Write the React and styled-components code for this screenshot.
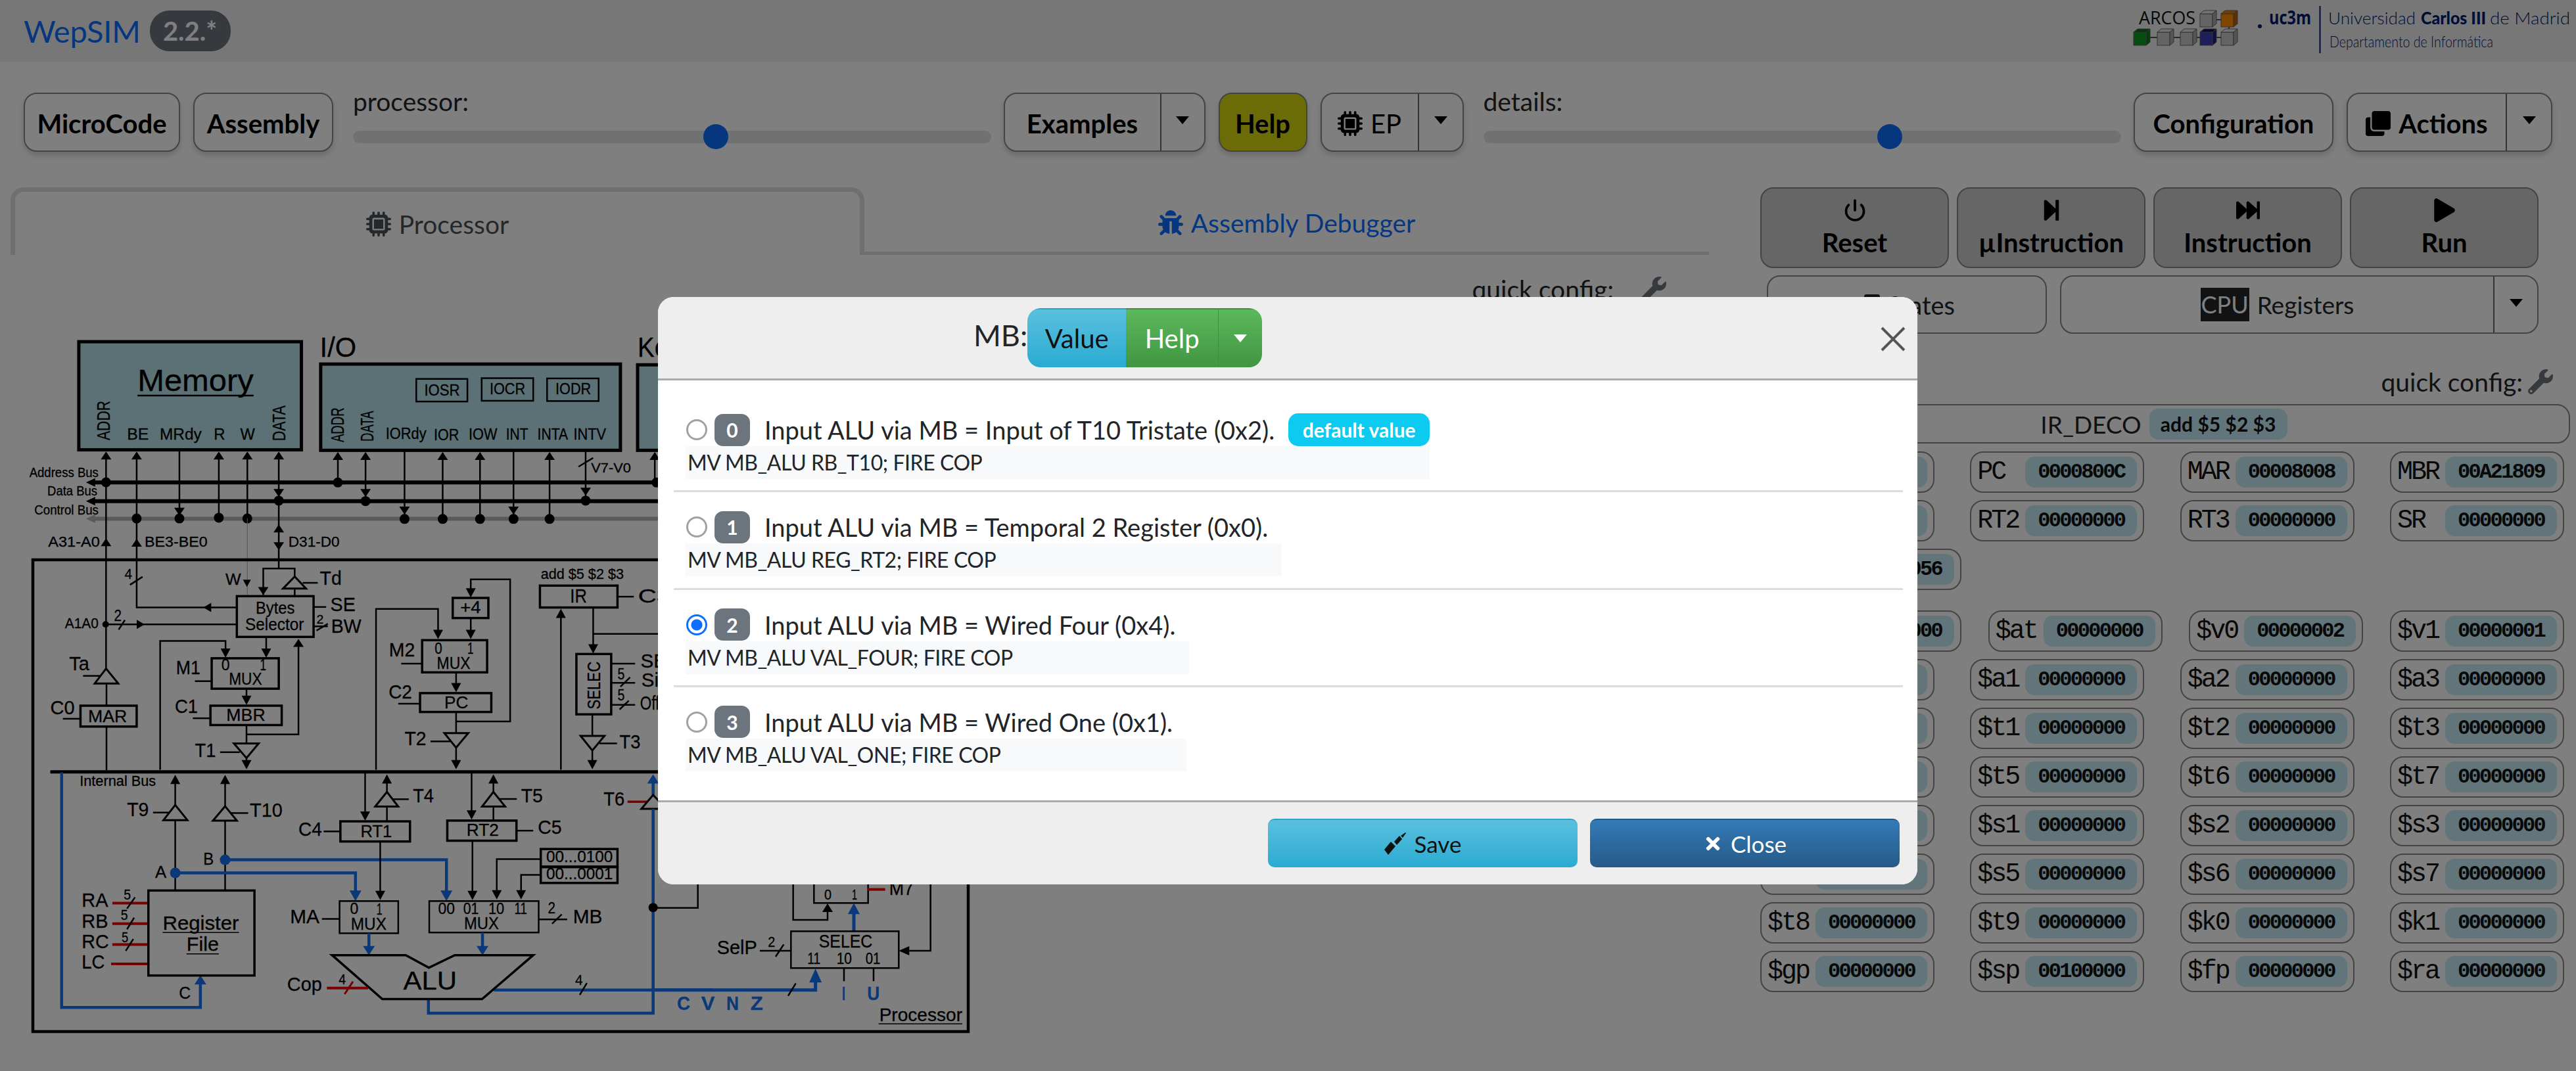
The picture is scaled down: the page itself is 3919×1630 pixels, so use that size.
import React from "react";
import styled, { createGlobalStyle } from "styled-components";
import { FaBug, FaStepForward, FaFastForward, FaPlay, FaWrench, FaClone, FaTimes } from "react-icons/fa";
import { FaMicrochip } from "react-icons/fa6";
import { Power } from "lucide-react";

const UI = `Lato, "Open Sans", sans-serif`;
const MONO = `"Liberation Mono", monospace`;

const GlobalStyle = createGlobalStyle`
  html, body { margin: 0; padding: 0; background: #fff; }
  body { font-family: ${UI}; color: #212529; }
  * { box-sizing: border-box; }
`;

const Page = styled.div`width: 3919px; height: 1630px; overflow: hidden; position: relative; background: #fff;`;
const Header = styled.header`height: 94px; background: #eee; display: flex; align-items: center; justify-content: space-between; padding-left: 36px;`;
const Brand = styled.div`display: flex; align-items: center; gap: 14px;`;
const BrandName = styled.span`font-size: 47px; color: #0d6efd; letter-spacing: -.2px;`;
const VersionBadge = styled.span`width: 123px; height: 62px; border-radius: 30px; background: #6c757d; color: #fff; font-weight: 700; font-size: 40px; display: flex; align-items: center; justify-content: center;`;

const Toolbar = styled.div`display: flex; align-items: flex-start; gap: 20px; padding: 36px 36px 0; height: 191px;`;
const Btn = styled.button`
  flex: 0 0 ${p => p.$w}px; height: 90px; margin-top: 11px; padding: 3px 0 0;
  font: ${p => (p.$light ? 400 : 700)} 40px ${UI}; color: #000;
  background: ${p => p.$bg || "#fff"}; border: 2.5px solid #888; border-radius: 20px;
  box-shadow: 0 5px 10px rgba(0,0,0,.18); display: flex; align-items: center; justify-content: center; gap: 12px;
`;
const BtnGroup = styled.div`flex: 0 0 ${p => p.$w}px; height: 90px; margin-top: 11px; display: flex; border: 2.5px solid #888; border-radius: 20px; box-shadow: 0 5px 10px rgba(0,0,0,.18); background: #fff;`;
const GroupMain = styled.div`flex: 1; display: flex; align-items: center; justify-content: center; gap: 12px; padding-top: 3px; font-weight: ${p => (p.$light ? 400 : 700)}; font-size: 40px; color: #000;`;
const GroupCaret = styled.div`flex: 0 0 ${p => p.$w}px; border-left: 2px solid #666; display: flex; align-items: center; justify-content: center; padding-bottom: 6px;`;
const Caret = styled.span`width: 0; height: 0; border-left: 10px solid transparent; border-right: 10px solid transparent; border-top: 12px solid ${p => p.$c || "#000"};`;
const SliderBlock = styled.div`flex: 1; margin-left: 10px; margin-right: -1px; display: flex; flex-direction: column;`;
const SliderLabel = styled.div`font-size: 39px; line-height: 48px; color: #212529;`;
const Track = styled.div`position: relative; height: 19px; margin-top: 21px; background: #dee2e6; border-radius: 10px;`;
const Thumb = styled.span`position: absolute; top: -10px; width: 38px; height: 38px; margin-left: -19px; border-radius: 50%; background: #0d6efd;`;

const Main = styled.div`display: flex; height: 1345px;`;
const LeftCol = styled.div`flex: 0 0 2584px; margin-left: 16px; margin-right: 78px;`;
const Tabs = styled.div`display: flex; height: 103px;`;
const Tab = styled.div`
  flex: 1; display: flex; align-items: center; justify-content: center; gap: 12px; font-size: 39px; padding-top: ${p => (p.$active ? 2 : 9)}px;
  color: ${p => (p.$active ? "#495057" : "#0d6efd")};
  ${p => p.$active
    ? "border: 7px solid #dedede; border-bottom: 0; border-radius: 20px 20px 0 0;"
    : "border-bottom: 5px solid #dedede;"}
`;
const QuickLeft = styled.div`height: 62px; padding: 28px 65px 0 0; display: flex; justify-content: flex-end; align-items: flex-start; gap: 42px; font-size: 39px; line-height: 48px; color: #212529;`;
const WrenchIcon = styled(FaWrench)`font-size: 38px; color: #6c757d; margin-top: 5px;`;
const DiagramSvg = styled.svg`display: block; margin-left: -16px;`;

const RightCol = styled.div`flex: 0 0 1232px;`;
const ActionRow = styled.div`display: grid; grid-template-columns: repeat(4, 287px); column-gap: 12px; height: 123px;`;
const ActionBtn = styled.button`
  border: 2.5px solid #888; border-radius: 20px; background: #ccc; padding: 15px 0 0;
  font: 700 40px ${UI}; color: #000; display: flex; flex-direction: column; align-items: center; gap: 7px;
  svg { font-size: 36px; height: 36px; }
`;
const ViewRow = styled.div`display: flex; gap: 20px; margin: 11px 48px 0 10px; height: 89px;`;
const ViewBtn = styled.div`flex: 0 0 426px; border: 2.5px solid #888; border-radius: 20px; display: flex; align-items: center; justify-content: center; gap: 12px; font-size: 38px;`;
const ViewGroup = styled.div`flex: 1; border: 2.5px solid #888; border-radius: 20px; display: flex;`;
const ViewMain = styled.div`flex: 1; display: flex; align-items: center; justify-content: center; gap: 12px; font-size: 37px;`;
const CpuTag = styled.span`width: 74px; text-align: center; background: #212529; color: #fff; height: 51px; line-height: 51px; font-size: 36px;`;
const QuickRight = styled.div`height: 107px; padding: 49px 26px 0 0; display: flex; justify-content: flex-end; align-items: flex-start; gap: 8px; font-size: 39px; line-height: 48px;`;
const IrBox = styled.div`height: 60px; margin-left: 2px; padding-right: 6px; border: 2.5px solid #888; border-radius: 20px; display: flex; align-items: center; justify-content: center; gap: 12px; font-size: 37px;`;
const IrPill = styled.span`width: 210px; height: 47px; border-radius: 14px; background: #c4eaf6; display: flex; align-items: center; justify-content: center; font-size: 30px; font-weight: 700; color: #111;`;
const RegRows = styled.div`display: flex; flex-direction: column; gap: 11px; margin: ${p => p.$top}px 9px 0 0;`;
const RegRow = styled.div`display: flex; justify-content: ${p => (p.$start ? "flex-start" : "space-between")};`;
const RegBox = styled.div`flex: 0 0 ${p => (p.$wide ? 306 : 265)}px; height: 63px; border: 2.5px solid #888; border-radius: 20px; display: flex; align-items: center; justify-content: space-between; padding: 0 9px 0 9px;`;
const RegName = styled.span`font: 400 40px ${MONO}; letter-spacing: -3px; color: #111;`;
const RegValue = styled.span`width: 170px; height: 47px; border-radius: 14px; background: #c4eaf6; display: flex; align-items: center; justify-content: center; font: 700 32px ${MONO}; letter-spacing: -2.7px; color: #111;`;

const Backdrop = styled.div`position: absolute; inset: 0; background: rgba(0,0,0,.5);`;
const Modal = styled.div`position: absolute; left: 1001px; top: 452px; width: 1916px; height: 894px; background: #fff; border-radius: 24px; overflow: hidden; display: flex; flex-direction: column;`;
const ModalHead = styled.div`flex: 0 0 127px; background: #eee; border-bottom: 3px solid #aaa; display: flex; align-items: center; padding: 0 0 8px 480px; position: relative;`;
const ModalTitle = styled.span`font-size: 45px; color: #212529;`;
const HeadGroup = styled.div`display: flex; height: 90px; border-radius: 20px; overflow: hidden; margin-top: 8px;`;
const HeadBtn = styled.div`
  width: ${p => p.$w}px; display: flex; align-items: center; justify-content: center; font-size: 40px; color: ${p => p.$fg};
  background: ${p => (p.$blue ? "linear-gradient(#5bc0de,#2aabd2)" : "linear-gradient(#5cb85c,#419641)")};
  border-top: 2px solid ${p => (p.$blue ? "#28a4c9" : "#3e8f3e")};
  ${p => p.$split && "border-left: 1px solid #3e8f3e;"}
`;
const CloseX = styled.svg`position: absolute; right: 17px; top: 44px;`;
const ModalBody = styled.div`flex: 1; display: flex; flex-direction: column; padding-top: 22px;`;
const OptionRow = styled.div`height: 148.33px; margin: 0 22px 0 24px; padding: 28px 0 0 18px; ${p => !p.$last && "border-bottom: 3px solid #ddd;"}`;
const OptionWrap = styled.div`display: inline-block;`;
const OptionLine = styled.div`display: flex; align-items: center; height: 50px;`;
const Radio = styled.span`
  width: 32px; height: 32px; border-radius: 50%; margin: 0 11px 0 1px; background: #fff;
  border: 3.5px solid ${p => (p.$on ? "#0d6efd" : "#a0a0a8")};
  ${p => p.$on && "background: radial-gradient(circle, #0d6efd 0 8px, #fff 9px);"}
`;
const NumBadge = styled.span`width: 54px; height: 49px; border-radius: 13px; background: #6c757d; color: #fff; font-weight: 700; font-size: 30px; display: flex; align-items: center; justify-content: center; margin-right: 22px;`;
const OptionText = styled.span`font-size: 38px; color: #212529; margin-right: 21px;`;
const DefaultPill = styled.span`width: 215px; height: 50px; border-radius: 15px; background: #0dcaf0; color: #fff; font-weight: 700; font-size: 30px; display: flex; align-items: center; justify-content: center;`;
const CodeLine = styled.div`height: 50px; line-height: 50px; background: #f8f9fa; padding-left: 3px; font-size: 32px; letter-spacing: -.45px; color: #212529;`;
const ModalFoot = styled.div`flex: 0 0 128px; background: #eee; border-top: 3px solid #aaa; display: flex; justify-content: flex-end; gap: 19px; padding: 25px 27px 0 0;`;
const FootBtn = styled.div`
  width: 471px; height: 74px; border-radius: 10px; display: flex; align-items: center; justify-content: center; gap: 12px; font-size: 35px;
  color: ${p => (p.$dark ? "#fff" : "#111")};
  background: ${p => (p.$dark ? "linear-gradient(#337ab7,#265a88)" : "linear-gradient(#5bc0de,#2aabd2)")};
  border-top: 2px solid ${p => (p.$dark ? "#245580" : "#28a4c9")};
`;

const INK = "#000", TEAL = "#b6e2ea", BLUE = "#1470f0", RED = "#f00000", GREY = "#b4b4b4";
const SANS = "Liberation Sans";
const TXT = 1.1;

function makeKit(out, sx, sy, ox, oy) {
  const X = u => ox + u / sx, Y = v => oy + v / sy;
  const push = el => out.push(React.cloneElement(el, { key: out.length }));
  const arrow = (u, v, dir, c = INK, len = 12, wid = 16) => {
    const x = X(u), y = Y(v), h = wid / 2;
    const pts = dir === "up" ? [[x, y], [x - h, y + len], [x + h, y + len]]
      : dir === "down" ? [[x, y], [x - h, y - len], [x + h, y - len]]
      : dir === "left" ? [[x, y], [x + len, y - h], [x + len, y + h]]
      : [[x, y], [x - len, y - h], [x - len, y + h]];
    push(<polygon points={pts.map(p => p.join(",")).join(" ")} fill={c} />);
  };
  return {
    l: (pts, w = 2.5, c = INK) => push(<polyline points={pts.map(([u, v]) => `${X(u)},${Y(v)}`).join(" ")} fill="none" stroke={c} strokeWidth={c === BLUE ? w + 1 : w} />),
    r: (u1, v1, u2, v2, w = 3, fill = "none") => push(<rect x={X(u1)} y={Y(v1)} width={X(u2) - X(u1)} height={Y(v2) - Y(v1)} fill={fill} stroke={INK} strokeWidth={w} />),
    t: (u1, u2, v, size, s, o = {}) => push(<text x={X(u1)} y={Y(v)} fontFamily={SANS} fontSize={size * TXT} fill={o.c || INK} stroke={o.c || INK} strokeWidth=".3" fontWeight={o.b ? 700 : 400} textLength={X(u2) - X(u1)} lengthAdjust="spacingAndGlyphs">{s}</text>),
    vt: (u, vb, vt, size, s) => push(<text transform={`translate(${X(u)},${Y(vb)}) rotate(-90)`} fontFamily={SANS} fontSize={size} fill={INK} stroke={INK} strokeWidth=".3" textLength={(vb - vt) / sy} lengthAdjust="spacingAndGlyphs">{s}</text>),
    d: (u, v, r = 7.5, c = INK) => push(<ellipse cx={X(u)} cy={Y(v)} rx={r} ry={r} fill={c} />),
    p: (pts, w = 3, fill = "none") => push(<polygon points={pts.map(([u, v]) => `${X(u)},${Y(v)}`).join(" ")} fill={fill} stroke={INK} strokeWidth={w} />),
    up: (u, v, c, len, wid) => arrow(u, v, "up", c, len, wid),
    dn: (u, v, c, len, wid) => arrow(u, v, "down", c, len, wid),
    lf: (u, v, c, len, wid) => arrow(u, v, "left", c, len, wid),
    rt: (u, v, c, len, wid) => arrow(u, v, "right", c, len, wid),
  };
}

function Diagram() {
  const out = [];
  const a = makeKit(out, 1.568, 2.613, 0, 450);
  const b = makeKit(out, 1.568, 2.613, 0, 1030);
  const c = makeKit(out, 3, 3, 1000, 1340);
  const p = makeKit(out, 1, 1, 0, 0);

  // memory & io boxes
  a.r(188, 183, 719, 613, 5, TEAL);
  a.r(765, 272, 1480, 615, 5, TEAL);
  a.r(1521, 275, 1800, 615, 5, TEAL);
  a.t(328, 605, 378, 42, "Memory"); a.l([[328, 397], [605, 397]], 2.5);
  a.t(763, 850, 243, 38, "I/O"); a.t(1521, 1779, 243, 38, "Keyboard");
  a.vt(262, 575, 418, 28, "ADDR"); a.vt(680, 578, 437, 28, "DATA");
  a.vt(820, 583, 445, 28, "ADDR"); a.vt(890, 580, 458, 28, "DATA");
  a.t(303, 355, 572, 22.5, "BE"); a.t(381, 481, 572, 22.5, "MRdy"); a.t(510, 537, 572, 22.5, "R"); a.t(573, 608, 572, 22.5, "W");
  a.t(920, 1017, 570, 22.5, "IORdy"); a.t(1035, 1095, 576, 22.5, "IOR"); a.t(1118, 1186, 572, 22.5, "IOW"); a.t(1207, 1260, 572, 22.5, "INT"); a.t(1282, 1355, 572, 22.5, "INTA"); a.t(1368, 1446, 572, 22.5, "INTV");
  a.r(993, 331, 1115, 421, 2.5); a.t(1012, 1097, 397, 21, "IOSR");
  a.r(1149, 328, 1272, 418, 2.5); a.t(1168, 1253, 392, 21, "IOCR");
  a.r(1305, 329, 1428, 419, 2.5); a.t(1325, 1410, 393, 21, "IODR");

  // buses
  a.l([[215, 743], [1700, 743]], 6); a.lf(205, 743, INK, 14, 13);
  a.l([[215, 817], [1700, 817]], 6); a.lf(205, 817, INK, 14, 13);
  a.l([[215, 887], [1700, 887]], 6, GREY); a.lf(205, 887, GREY, 14, 13);
  a.t(70, 235, 722, 18, "Address Bus"); a.t(113, 232, 795, 18, "Data Bus"); a.t(82, 235, 869, 18, "Control Bus");

  // verticals
  a.l([[253, 625], [253, 1483]]); a.up(253, 620); a.d(253, 742); a.up(253, 965);
  a.l([[326, 625], [326, 1240], [565, 1240]]); a.up(326, 620); a.d(326, 886); a.up(326, 967); a.lf(485, 1240, INK, 12, 14);
  a.l([[428, 615], [428, 880]]); a.dn(428, 875); a.d(428, 886);
  a.l([[522, 625], [522, 883]]); a.up(522, 620); a.d(522, 883);
  a.l([[590, 625], [590, 886]]); a.up(590, 620); a.d(590, 886);
  a.l([[590, 886], [590, 1190]], 1, "#aaa"); a.dn(589, 1158, INK, 11, 12);
  a.l([[665, 625], [665, 1085]]); a.up(665, 620); a.dn(665, 800); a.d(665, 815); a.up(665, 910); a.dn(665, 1012);
  a.l([[628, 1190], [628, 1085], [703, 1085], [703, 1115]]); a.dn(628, 1190);
  a.p([[703, 1117], [675, 1165], [730, 1165]]); a.l([[703, 1165], [703, 1195]]); a.l([[722, 1142], [758, 1142]]); a.t(763, 815, 1150, 27, "Td");
  a.t(115, 238, 998, 20, "A31-A0"); a.t(345, 495, 998, 20, "BE3-BE0"); a.t(688, 810, 998, 20, "D31-D0");

  a.l([[806, 625], [806, 743]]); a.up(806, 622); a.d(806, 743);
  a.l([[872, 625], [872, 817]]); a.up(872, 622); a.dn(872, 800); a.d(872, 817);
  a.l([[965, 615], [965, 880]]); a.dn(965, 870); a.d(965, 888);
  a.l([[1056, 625], [1056, 888]]); a.up(1056, 622); a.d(1056, 888);
  a.l([[1145, 625], [1145, 888]]); a.up(1145, 622); a.d(1145, 888);
  a.l([[1225, 615], [1225, 880]]); a.dn(1225, 870); a.d(1225, 888);
  a.l([[1311, 625], [1311, 888]]); a.up(1311, 622); a.d(1311, 888);
  a.l([[1397, 615], [1397, 815]]); a.dn(1397, 795); a.d(1397, 815); a.l([[1380, 680], [1415, 645]]);
  a.t(1410, 1505, 703, 19, "V7-V0");
  a.l([[1562, 625], [1562, 743]]); a.up(1562, 622); a.d(1566, 743);

  // processor frame
  p.r(50, 852, 1473, 1570, 4.5);

  // bytes selector
  a.t(297, 315, 1125, 20, "4"); a.l([[310, 1150], [340, 1118]]);
  a.t(538, 575, 1150, 22, "W");
  a.r(565, 1195, 748, 1357, 3.5); a.t(610, 703, 1265, 24, "Bytes"); a.t(585, 725, 1330, 24, "Selector");
  a.l([[748, 1238], [778, 1238]]); a.t(788, 848, 1255, 27, "SE");
  a.l([[748, 1315], [782, 1315]]); a.l([[755, 1332], [782, 1305]]); a.t(755, 772, 1303, 17, "2"); a.t(790, 862, 1340, 27, "BW");
  a.t(155, 235, 1322, 20, "A1A0"); a.d(252, 1307, 5); a.l([[252, 1307], [565, 1307]]); a.rt(345, 1307, INK, 12, 14);
  a.l([[283, 1328], [298, 1290]]); a.t(272, 290, 1293, 21, "2");
  a.l([[635, 1357], [635, 1410]]); a.dn(635, 1440, INK, 14, 15);
  a.up(712, 1365); a.l([[712, 1370], [712, 1745], [588, 1745]]);
  a.r(505, 1442, 665, 1563, 3.5); a.t(528, 548, 1490, 21, "0"); a.t(620, 635, 1490, 21, "1"); a.t(546, 625, 1547, 23, "MUX"); a.t(420, 478, 1505, 27, "M1"); a.l([[465, 1533], [505, 1533]]);
  a.l([[382, 1885], [382, 1373], [538, 1373], [538, 1420]]); a.dn(538, 1440, INK, 14, 15);
  a.t(165, 213, 1490, 27, "Ta"); a.p([[253, 1483], [226, 1542], [282, 1542]]); a.l([[198, 1512], [240, 1512]]);

  // M2
  a.l([[897, 1885], [897, 1246], [1045, 1246], [1045, 1340]]); a.dn(1045, 1365, INK, 14, 15);
  a.r(1080, 1202, 1165, 1282, 3.5); a.t(1098, 1147, 1262, 23, "+4");
  a.l([[1123, 1282], [1123, 1340]]); a.dn(1123, 1365, INK, 14, 15);
  a.l([[1123, 1180], [1123, 1128], [1217, 1128], [1217, 1693], [1088, 1693]]); a.dn(1123, 1200, INK, 14, 15);
  a.r(1007, 1370, 1162, 1498, 3.5); a.t(1037, 1055, 1425, 21, "0"); a.t(1115, 1130, 1425, 21, "1"); a.t(1042, 1122, 1485, 23, "MUX"); a.t(928, 990, 1435, 27, "M2"); a.l([[957, 1463], [1007, 1463]]);
  a.l([[1088, 1498], [1088, 1560]]); a.dn(1088, 1577, INK, 14, 15);
  // IR
  a.t(1290, 1488, 1125, 20, "add $5 $2 $3");
  a.r(1288, 1153, 1473, 1240, 3.5); a.t(1360, 1400, 1220, 27, "IR");
  a.l([[1473, 1197], [1512, 1197]]); a.t(1522, 1600, 1220, 27, "C3");
  a.l([[1338, 1885], [1338, 1260]]); a.up(1338, 1245, INK, 14, 15);
  a.l([[1415, 1240], [1415, 1400]]); a.dn(1415, 1423, INK, 14, 15);
  a.l([[1415, 1345], [1700, 1345]]);
  a.r(1375, 1425, 1458, 1665, 3.5); a.vt(1432, 1645, 1455, 28, "SELEC");
  a.l([[1458, 1463], [1515, 1463]]); a.t(1528, 1590, 1480, 27, "SE");
  a.l([[1458, 1540], [1515, 1540]]); a.l([[1480, 1555], [1503, 1518]]); a.t(1473, 1490, 1525, 21, "5"); a.t(1530, 1620, 1555, 27, "Size");

  // zoom 5 region
  b.l([[1460, 112], [1515, 112]]); b.l([[1478, 130], [1500, 95]]); b.t(1473, 1490, 95, 21, "5"); b.t(1527, 1620, 130, 27, "Offset");
  b.r(192, 115, 326, 198, 3.5); b.t(210, 303, 180, 24, "MAR"); b.t(120, 178, 148, 27, "C0"); b.l([[150, 167], [192, 167]]);
  b.l([[254, 30], [254, 115]]); b.l([[254, 198], [254, 372]]);
  b.r(502, 115, 672, 192, 3.5); b.t(540, 633, 175, 24, "MBR"); b.t(417, 472, 145, 27, "C1"); b.l([[460, 165], [502, 165]]);
  b.l([[588, 48], [588, 90]]); b.dn(588, 112, INK, 14, 15);
  b.l([[588, 192], [588, 265]]);
  b.p([[558, 265], [617, 265], [588, 323]]); b.l([[525, 300], [572, 300]]); b.t(465, 515, 318, 27, "T1");
  b.l([[588, 323], [588, 345]]); b.dn(588, 368, INK, 14, 15);
  b.r(1002, 65, 1172, 140, 3.5); b.t(1060, 1117, 125, 24, "PC"); b.t(927, 983, 85, 27, "C2"); b.l([[950, 107], [1002, 107]]);
  b.l([[1088, 140], [1088, 224]]); b.p([[1060, 224], [1117, 224], [1088, 282]]); b.t(965, 1017, 272, 27, "T2"); b.l([[1027, 257], [1074, 257]]);
  b.l([[1088, 282], [1088, 345]]); b.dn(1088, 368, INK, 14, 15);
  b.l([[1413, 150], [1413, 235]]); b.p([[1385, 235], [1442, 235], [1413, 293]]); b.l([[1430, 265], [1472, 265]]); b.t(1478, 1528, 285, 27, "T3");
  b.l([[1413, 293], [1413, 345]]); b.dn(1413, 368, INK, 14, 15);
  b.l([[120, 378], [1700, 378]], 5);
  b.t(190, 372, 435, 20, "Internal Bus");

  // ALU paths
  b.l([[147, 380], [147, 1315], [478, 1315], [478, 1210]], 3.5, BLUE); b.up(478, 1187, BLUE, 14, 18); b.t(427, 455, 1280, 24, "C");
  b.up(418, 390, INK, 14, 15); b.l([[418, 420], [418, 510]]); b.p([[418, 510], [390, 570], [447, 570]]); b.l([[365, 540], [405, 540]]); b.t(303, 355, 555, 27, "T9"); b.l([[418, 570], [418, 850]]);
  b.up(537, 390, INK, 14, 15); b.l([[537, 420], [537, 515]]); b.p([[537, 515], [508, 572], [565, 572]]); b.l([[552, 542], [592, 542]]); b.t(596, 674, 557, 27, "T10"); b.l([[537, 572], [537, 850]]);
  b.r(812, 575, 978, 655, 3.5); b.t(860, 935, 637, 24, "RT1"); b.t(712, 768, 632, 27, "C4"); b.l([[772, 615], [812, 615]]);
  b.l([[871, 380], [871, 550]]); b.dn(871, 572, INK, 14, 15);
  b.up(923, 388, INK, 14, 15); b.l([[923, 415], [923, 458]]); b.p([[923, 458], [895, 516], [950, 516]]); b.l([[923, 516], [923, 575]]); b.l([[938, 487], [975, 487]]); b.t(985, 1035, 500, 27, "T4");
  b.r(1067, 572, 1232, 652, 3.5); b.t(1113, 1190, 632, 24, "RT2"); b.l([[1232, 612], [1272, 612]]); b.t(1283, 1340, 625, 27, "C5");
  b.l([[1125, 380], [1125, 546]]); b.dn(1125, 568, INK, 14, 15);
  b.up(1177, 388, INK, 14, 15); b.l([[1177, 415], [1177, 458]]); b.p([[1177, 458], [1150, 516], [1205, 516]]); b.l([[1177, 516], [1177, 572]]); b.l([[1192, 486], [1233, 486]]); b.t(1243, 1295, 500, 27, "T5");
  b.t(1440, 1490, 513, 27, "T6"); b.l([[1497, 497], [1545, 497]], 3.5, RED);
  b.up(1558, 388, BLUE, 14, 18); b.l([[1558, 415], [1558, 470]], 3.5, BLUE);
  b.p([[1558, 470], [1530, 525], [1590, 525]]); b.l([[1558, 525], [1558, 1338], [1022, 1338], [1022, 1283]], 3.5, BLUE);
  b.d(1558, 918, 7);
  b.l([[1178, 1246], [1700, 1246]], 3.5, BLUE); b.l([[1383, 1265], [1400, 1218]]); b.t(1372, 1390, 1225, 20, "4");
  b.t(370, 397, 800, 24, "A"); b.t(485, 510, 747, 24, "B");
  b.d(418, 780, 8, BLUE); b.d(537, 728, 8, BLUE);
  b.l([[428, 780], [848, 780], [848, 860]], 3.5, BLUE); b.dn(848, 892, BLUE, 16, 18);
  b.l([[545, 728], [1065, 728], [1065, 860]], 3.5, BLUE); b.dn(1065, 892, BLUE, 16, 18);
  b.l([[907, 655], [907, 860]]); b.dn(907, 888, INK, 14, 15);
  b.l([[1127, 652], [1127, 860]]); b.dn(1127, 888, INK, 14, 15);
  b.r(1290, 685, 1473, 755, 3.5); b.t(1303, 1462, 738, 22, "00...0100");
  b.r(1290, 757, 1473, 820, 3.5); b.t(1303, 1462, 806, 22, "00...0001");
  b.l([[1290, 725], [1185, 725], [1185, 860]]); b.dn(1185, 885, INK, 14, 15);
  b.l([[1290, 788], [1243, 788], [1243, 860]]); b.dn(1243, 885, INK, 14, 15);
  b.r(810, 892, 950, 1020, 2.5); b.t(835, 855, 942, 21, "0"); b.t(898, 912, 945, 21, "1"); b.t(837, 922, 1005, 23, "MUX");
  b.t(692, 762, 980, 27, "MA"); b.l([[768, 963], [810, 963]]);
  b.r(1024, 892, 1285, 1017, 2.5);
  b.t(1045, 1085, 943, 21, "00"); b.t(1105, 1142, 943, 21, "01"); b.t(1165, 1203, 943, 21, "10"); b.t(1227, 1257, 943, 21, "11"); b.t(1107, 1190, 1003, 23, "MUX");
  b.l([[1285, 965], [1353, 965]]); b.l([[1317, 982], [1340, 945]]); b.t(1307, 1325, 940, 21, "2"); b.t(1367, 1437, 980, 27, "MB");
  b.l([[880, 1020], [880, 1080]], 3.5, BLUE); b.dn(880, 1107, BLUE, 14, 18);
  b.l([[1151, 1017], [1151, 1080]], 3.5, BLUE); b.dn(1151, 1107, BLUE, 14, 18);
  b.p([[792, 1107], [968, 1107], [1023, 1157], [1085, 1107], [1272, 1107], [1150, 1282], [912, 1282]], 3.5);
  b.t(962, 1090, 1245, 36, "ALU");
  b.t(685, 768, 1250, 27, "Cop"); b.l([[780, 1238], [878, 1238]], 4, RED); b.l([[822, 1262], [842, 1212]], 3, RED); b.t(808, 825, 1222, 20, "4");
  b.r(354, 850, 607, 1188, 3.5);
  b.t(388, 570, 1005, 26, "Register"); b.l([[388, 1017], [570, 1017]], 1.5);
  b.t(445, 522, 1090, 26, "File"); b.l([[445, 1102], [522, 1102]], 1.5);
  b.t(195, 258, 915, 27, "RA"); b.l([[268, 900], [352, 900]], 4, RED); b.l([[303, 922], [322, 877]]); b.t(295, 312, 885, 20, "5");
  b.t(195, 258, 997, 27, "RB"); b.l([[268, 982], [352, 982]], 4, RED); b.l([[303, 1004], [320, 958]]); b.t(288, 305, 967, 20, "5");
  b.t(195, 260, 1078, 27, "RC"); b.l([[268, 1065], [352, 1065]], 4, RED); b.l([[300, 1090], [318, 1043]]); b.t(290, 306, 1055, 20, "5");
  b.t(195, 250, 1160, 27, "LC"); b.l([[265, 1142], [352, 1142]], 4, RED);

  // below the dialog
  c.l([[185, -60], [185, 125], [0, 125]]);
  c.l([[620, -60], [620, 180], [777, 180], [777, 140]]); c.up(777, 105, INK, 13, 16);
  c.r(715, -60, 962, 103, 2.5);
  c.l([[960, 41], [1040, 41]], 4, RED); c.t(1058, 1170, 65, 27, "M7");
  c.t(762, 795, 87, 20, "0"); c.t(888, 912, 87, 20, "1");
  c.l([[897, 150], [897, 235]], 4, BLUE); c.up(897, 103, BLUE, 17, 18);
  c.r(610, 232, 1102, 400, 2.5);
  c.t(737, 982, 306, 25, "SELEC"); c.t(685, 745, 382, 21, "11"); c.t(818, 888, 382, 21, "10"); c.t(950, 1018, 382, 21, "01");
  c.t(272, 455, 335, 27, "SelP"); c.l([[468, 321], [610, 321]]); c.l([[540, 348], [577, 292]]); c.t(505, 538, 303, 20, "2");
  c.l([[1247, -60], [1247, 321], [1150, 321]]); c.lf(1102, 321, INK, 16, 14);
  c.l([[-10, 500], [722, 500], [722, 460]], 4, BLUE); c.up(722, 403, BLUE, 21, 19);
  c.l([[597, 527], [632, 470]]);
  c.t(90, 150, 590, 26, "C", { b: 1, c: BLUE }); c.t(200, 262, 590, 26, "V", { b: 1, c: BLUE }); c.t(315, 372, 590, 26, "N", { b: 1, c: BLUE }); c.t(425, 482, 590, 26, "Z", { b: 1, c: BLUE });
  c.t(843, 858, 545, 26, "I", { b: 1, c: BLUE }); c.t(958, 1015, 545, 26, "U", { b: 1, c: BLUE });
  c.l([[852, 400], [852, 460]]); c.l([[987, 400], [987, 460]]);
  c.t(1013, 1392, 642, 25, "Processor"); c.l([[1010, 655], [1392, 655]], 1.5);

  return <DiagramSvg viewBox="0 450 1520 1150" width="1520" height="1150">{out}</DiagramSvg>;
}

const Cube = ({ x, y, c, top, side }) => (
  <g stroke="#666" strokeWidth="1">
    <rect x={x} y={y + 5} width={19} height={20} fill={c} />
    <polygon points={`${x},${y + 5} ${x + 6},${y} ${x + 25},${y} ${x + 19},${y + 5}`} fill={top} />
    <polygon points={`${x + 19},${y + 5} ${x + 25},${y} ${x + 25},${y + 20} ${x + 19},${y + 25}`} fill={side} />
  </g>
);

function Logos() {
  const gray = ["#c8c8c8", "#e4e4e4", "#aaa"];
  return (
    <svg width="679" height="94" viewBox="3240 0 679 94">
      <text x="3254" y="37" fontFamily="Open Sans" fontSize="28" textLength="86" lengthAdjust="spacingAndGlyphs" fill="#111">ARCOS</text>
      <path d="M3372 30h7M3271 57h11M3307 57h10M3342 57h5M3372 57h7M3391 41v4" stroke="#555" strokeWidth="2" />
      <Cube x={3347} y={16} c={gray[0]} top={gray[1]} side={gray[2]} />
      <Cube x={3379} y={16} c="#ff8c00" top="#e08000" side="#b86000" />
      <Cube x={3246} y={44} c="#0c9a20" top="#0a6a18" side="#0a7a18" />
      <Cube x={3282} y={44} c={gray[0]} top={gray[1]} side={gray[2]} />
      <Cube x={3317} y={44} c={gray[0]} top={gray[1]} side={gray[2]} />
      <Cube x={3347} y={44} c="#3c3cb0" top="#101050" side="#202080" />
      <Cube x={3379} y={44} c={gray[0]} top={gray[1]} side={gray[2]} />
      <circle cx="3438" cy="40" r="3" fill="#001a70" />
      <text x="3452" y="37" fontFamily="Open Sans" fontWeight="700" fontSize="28" textLength="64" lengthAdjust="spacingAndGlyphs" fill="#001a70">uc3m</text>
      <rect x="3528.5" y="9" width="2" height="72" fill="#001a70" />
      <g fontFamily="Lato" fill="#001a70">
        <text x="3542" y="37" fontSize="26" fontWeight="300" textLength="133" lengthAdjust="spacingAndGlyphs">Universidad</text>
        <text x="3683" y="37" fontSize="26" fontWeight="900" textLength="99" lengthAdjust="spacingAndGlyphs">Carlos III</text>
        <text x="3788" y="37" fontSize="26" fontWeight="300" textLength="122" lengthAdjust="spacingAndGlyphs">de Madrid</text>
        <text x="3544" y="72" fontSize="23" fontWeight="300" textLength="249" lengthAdjust="spacingAndGlyphs">Departamento de Informática</text>
      </g>
    </svg>
  );
}

const SaveIcon = () => (
  <svg width="34" height="34" viewBox="0 0 34 34" fill="#111">
    <polygon points="0,26 10,14 17,21 6,34" />
    <polygon points="15,14 23,5 27,10 19,19" />
    <polygon points="25,5 32,0 33,1 28,8" />
  </svg>
);

const rows = [
  [["IR", "00A21809"], ["PC", "0000800C"], ["MAR", "00008008"], ["MBR", "00A21809"]],
  [["RT1", "00000000"], ["RT2", "00000000"], ["RT3", "00000000"], ["SR", "00000000"]],
];
const regs = [
  [["$zero", "00000000", 1], ["$at", "00000000"], ["$v0", "00000002"], ["$v1", "00000001"]],
  [["$a0", "00000000"], ["$a1", "00000000"], ["$a2", "00000000"], ["$a3", "00000000"]],
  [["$t0", "00000000"], ["$t1", "00000000"], ["$t2", "00000000"], ["$t3", "00000000"]],
  [["$t4", "00000000"], ["$t5", "00000000"], ["$t6", "00000000"], ["$t7", "00000000"]],
  [["$s0", "00000000"], ["$s1", "00000000"], ["$s2", "00000000"], ["$s3", "00000000"]],
  [["$s4", "00000000"], ["$s5", "00000000"], ["$s6", "00000000"], ["$s7", "00000000"]],
  [["$t8", "00000000"], ["$t9", "00000000"], ["$k0", "00000000"], ["$k1", "00000000"]],
  [["$gp", "00000000"], ["$sp", "00100000"], ["$fp", "00000000"], ["$ra", "00000000"]],
];
const options = [
  ["0", "Input ALU via MB = Input of T10 Tristate (0x2).", "MV MB_ALU RB_T10; FIRE COP", false, true],
  ["1", "Input ALU via MB = Temporal 2 Register (0x0).", "MV MB_ALU REG_RT2; FIRE COP"],
  ["2", "Input ALU via MB = Wired Four (0x4).", "MV MB_ALU VAL_FOUR; FIRE COP", true],
  ["3", "Input ALU via MB = Wired One (0x1).", "MV MB_ALU VAL_ONE; FIRE COP"],
];

const Reg = ([n, v, wide]) => (
  <RegBox key={n} $wide={wide}><RegName>{n}</RegName><RegValue>{v}</RegValue></RegBox>
);

export default function App() {
  return (
    <Page>
      <GlobalStyle />
      <Header>
        <Brand><BrandName>WepSIM</BrandName><VersionBadge>2.2.*</VersionBadge></Brand>
        <Logos />
      </Header>
      <Toolbar>
        <Btn $w={238}>MicroCode</Btn>
        <Btn $w={213}>Assembly</Btn>
        <SliderBlock>
          <SliderLabel>processor:</SliderLabel>
          <Track><Thumb style={{ left: "56.9%" }} /></Track>
        </SliderBlock>
        <BtnGroup $w={307}><GroupMain>Examples</GroupMain><GroupCaret $w={67}><Caret /></GroupCaret></BtnGroup>
        <Btn $w={135} $bg="#d6d610">Help</Btn>
        <BtnGroup $w={218}><GroupMain $light><FaMicrochip size={38} />EP</GroupMain><GroupCaret $w={68}><Caret /></GroupCaret></BtnGroup>
        <SliderBlock>
          <SliderLabel>details:</SliderLabel>
          <Track><Thumb style={{ left: "63.7%" }} /></Track>
        </SliderBlock>
        <Btn $w={304}>Configuration</Btn>
        <BtnGroup $w={313}><GroupMain><FaClone size={38} />Actions</GroupMain><GroupCaret $w={69}><Caret /></GroupCaret></BtnGroup>
      </Toolbar>
      <Main>
        <LeftCol>
          <Tabs>
            <Tab $active><FaMicrochip size={38} />Processor</Tab>
            <Tab><FaBug size={38} />Assembly Debugger</Tab>
          </Tabs>
          <QuickLeft>quick config:<WrenchIcon /></QuickLeft>
          <Diagram />
        </LeftCol>
        <RightCol>
          <ActionRow>
            <ActionBtn><Power size={38} strokeWidth={2.5} />Reset</ActionBtn>
            <ActionBtn><FaStepForward />µInstruction</ActionBtn>
            <ActionBtn><FaFastForward />Instruction</ActionBtn>
            <ActionBtn><FaPlay />Run</ActionBtn>
          </ActionRow>
          <ViewRow>
            <ViewBtn><FaClone size={32} />States</ViewBtn>
            <ViewGroup>
              <ViewMain><CpuTag>CPU</CpuTag>Registers</ViewMain>
              <GroupCaret $w={67}><Caret /></GroupCaret>
            </ViewGroup>
          </ViewRow>
          <QuickRight>quick config:<WrenchIcon /></QuickRight>
          <IrBox>IR_DECO<IrPill>add $5 $2 $3</IrPill></IrBox>
          <RegRows $top={12}>
            {rows.map((r, i) => <RegRow key={i}>{r.map(Reg)}</RegRow>)}
            <RegRow $start>{Reg(["BR", "00000056", 1])}</RegRow>
          </RegRows>
          <RegRows $top={31}>
            {regs.map((r, i) => <RegRow key={i}>{r.map(Reg)}</RegRow>)}
          </RegRows>
        </RightCol>
      </Main>
      <Backdrop />
      <Modal>
        <ModalHead>
          <ModalTitle>MB:</ModalTitle>
          <HeadGroup>
            <HeadBtn $blue $w={150} $fg="#111">Value</HeadBtn>
            <HeadBtn $w={140} $fg="#fff">Help</HeadBtn>
            <HeadBtn $w={67} $fg="#fff" $split><Caret $c="#fff" /></HeadBtn>
          </HeadGroup>
          <CloseX width="40" height="40" viewBox="0 0 40 40"><path d="M3 3L37 37M37 3L3 37" stroke="#555" strokeWidth="4" /></CloseX>
        </ModalHead>
        <ModalBody>
          {options.map(([n, text, code, on, def], i) => (
            <OptionRow key={n} $last={i === 3}>
              <OptionWrap>
                <OptionLine>
                  <Radio $on={on} />
                  <NumBadge>{n}</NumBadge>
                  <OptionText>{text}</OptionText>
                  {def && <DefaultPill>default value</DefaultPill>}
                </OptionLine>
                <CodeLine>{code}</CodeLine>
              </OptionWrap>
            </OptionRow>
          ))}
        </ModalBody>
        <ModalFoot>
          <FootBtn><SaveIcon />Save</FootBtn>
          <FootBtn $dark><FaTimes size={30} />Close</FootBtn>
        </ModalFoot>
      </Modal>
    </Page>
  );
}
